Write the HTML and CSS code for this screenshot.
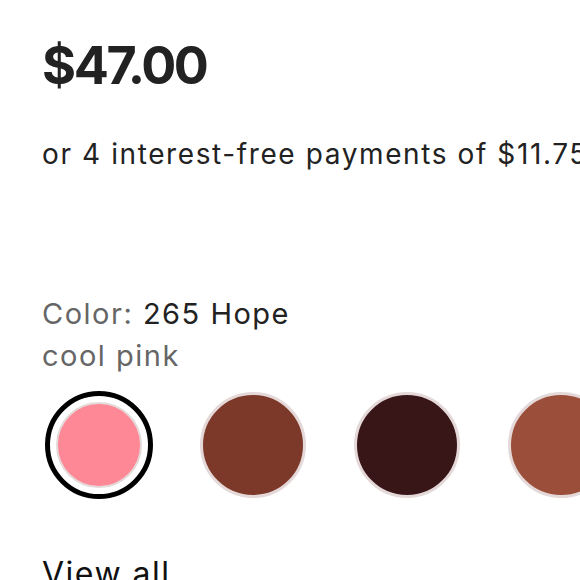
FILE: index.html
```html
<!DOCTYPE html>
<html lang="en">
<head>
<meta charset="utf-8">
<title>Product</title>
<link rel="stylesheet" href="styles.css">
</head>
<body>
<main class="product">
  <div class="price">$47.00</div>
  <p class="installments">or 4 interest-free payments of $11.75</p>
  <div class="color-label">
    <span class="muted">Color:</span> <span class="name">265 Hope</span><br>
    <span class="muted">cool pink</span>
  </div>
  <div class="swatches">
    <button class="swatch selected"><span class="dot pink"></span></button>
    <button class="swatch"><span class="dot brown"></span></button>
    <button class="swatch"><span class="dot dark"></span></button>
    <button class="swatch"><span class="dot terra"></span></button>
  </div>
  <a class="view-all" href="#">View all</a>
</main>
</body>
</html>
```
FILE: styles.css
```css
html, body {
  margin: 0;
  padding: 0;
  background: #ffffff;
  overflow: hidden;
}
body {
  width: 580px;
  height: 580px;
  font-family: Inter, "Liberation Sans", Arial, sans-serif;
  color: #222222;
}
.product {
  padding: 40px 0 0 42px;
  white-space: nowrap;
  overflow: hidden;
}
.price {
  font-size: 52px;
  font-weight: 700;
  line-height: 52px;
  letter-spacing: -2.4px;
  color: #222222;
}
.installments {
  margin: 0;
  padding-top: 45px;
  font-size: 28px;
  line-height: 34px;
  letter-spacing: 1.6px;
  color: #222222;
}
.color-label {
  padding-top: 122px;
  font-size: 29px;
  line-height: 42px;
  letter-spacing: 1.5px;
}
.muted {
  color: #666666;
}
.name {
  color: #222222;
}
.swatches {
  display: flex;
  gap: 46px;
  padding-top: 14px;
  margin-left: 3px;
}
.swatch {
  flex: 0 0 auto;
  width: 108px;
  height: 108px;
  padding: 0;
  margin: 0;
  border: none;
  background: transparent;
  border-radius: 50%;
  display: flex;
  align-items: center;
  justify-content: center;
}
.swatch .dot {
  display: block;
  width: 106px;
  height: 106px;
  box-sizing: border-box;
  border-radius: 50%;
  border: 3px solid #e4d8d8;
}
.swatch.selected {
  border: 5px solid #000000;
  box-sizing: border-box;
}
.swatch.selected .dot {
  width: 86px;
  height: 86px;
  border-width: 2px;
}
.pink { background: #fe8895; }
.brown { background: #7c3829; }
.dark { background: #381517; }
.terra { background: #9b4e3a; }
.view-all {
  display: block;
  padding-top: 55px;
  font-size: 32px;
  line-height: 40px;
  letter-spacing: 1.5px;
  color: #111111;
  text-decoration: none;
}
```
